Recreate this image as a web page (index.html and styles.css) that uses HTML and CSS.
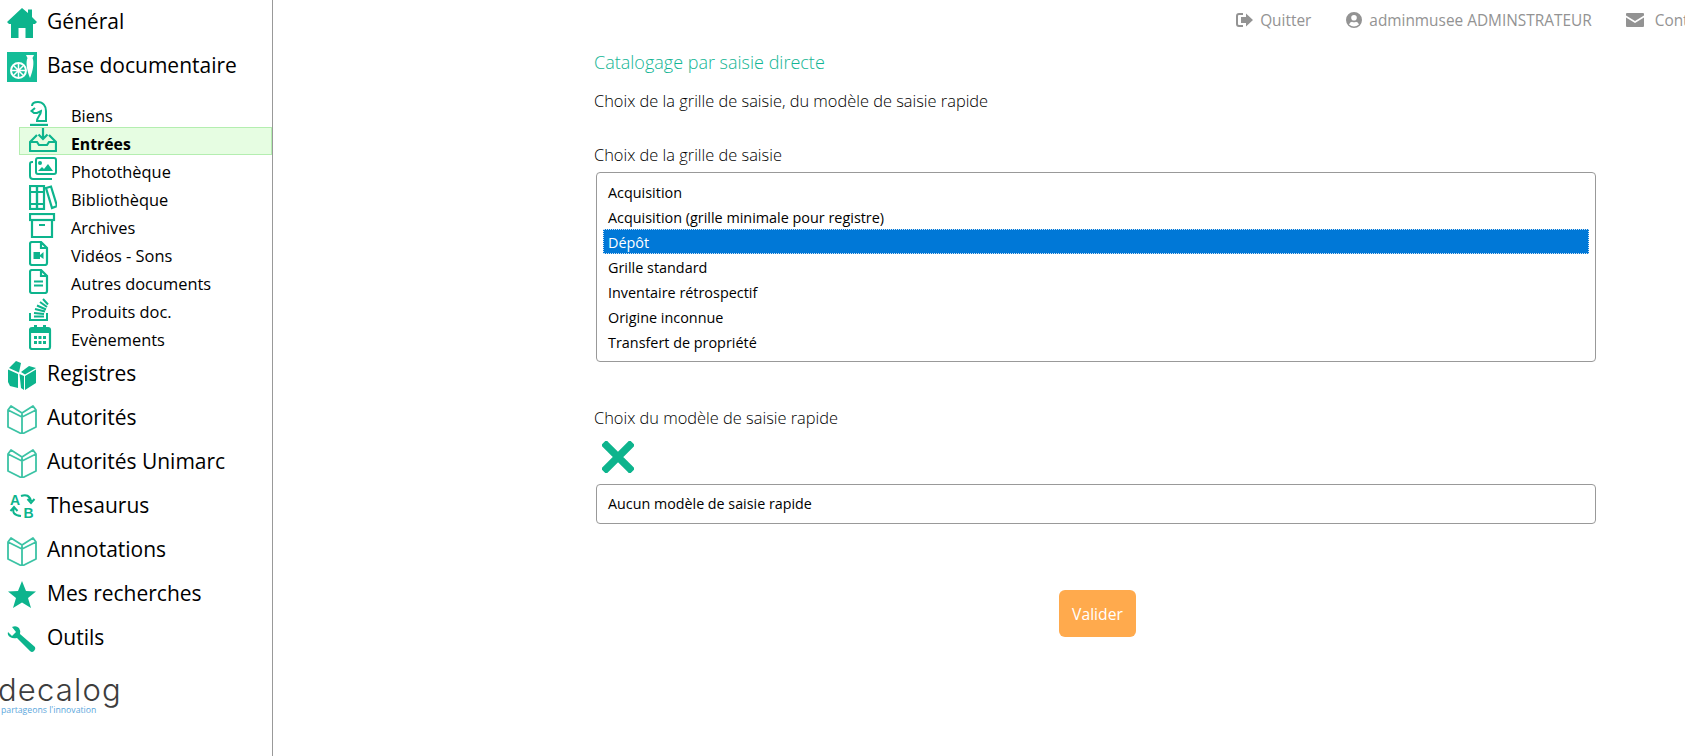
FILE: index.html
```html
<!DOCTYPE html>
<html lang="fr">

<head>
    <meta charset="UTF-8">
    <meta name="viewport" content="width=device-width, initial-scale=1.0">
    <title>Catalogage par saisie directe</title>
    <link rel="stylesheet" href="styles.css">
</head>

<body>
    <svg class="defs" width="0" height="0">
        <symbol id="book" viewBox="0 0 30 30">
            <path d="M15 9 L4 2 L1 6 V23 L15 30 L29 23 V6 L26 2 L15 9 V30 M1 6 L15 13 L29 6" fill="none" stroke="currentColor" stroke-width="1.800" stroke-linejoin="round" />
        </symbol>
    </svg>

    <aside class="sidebar">
        <nav class="menu">
            <a class="menu-row">
                <svg class="menu-icon" viewBox="0 0 30 30"><path fill="currentColor" d="M15 0 L21 5 V1.500 H25 V9 L30 14 L28 16 H26 V30 H18.500 V20 H11.500 V30 H4 V16 H2 L0 14 Z" /></svg>
                Général
            </a>
            <a class="menu-row">
                <svg class="menu-icon" viewBox="0 0 30 30">
                    <rect width="30" height="30" fill="#14bd98" />
                    <circle cx="11.500" cy="18.500" r="7.500" fill="none" stroke="#fff" stroke-width="2" />
                    <path d="M11.500 12 V25 M5 18.500 H18 M7 14 L16 23 M16 14 L7 23" stroke="#fff" stroke-width="1.500" />
                    <path fill="#fff" d="M19 3 H27 L25.500 6 C27.500 10 26 19 23 26 C20 19 18.500 10 20.500 6 Z" />
                </svg>
                Base documentaire
            </a>

            <ul class="submenu">
                <li class="sub-row">
                    <svg class="sub-icon" viewBox="0 0 28 25"><g fill="none" stroke="currentColor" stroke-width="2"><path d="M3 5 C3 2 6 1 9 1 C14 1 17 5 17 10 V20 H8 C8 16 12 14 12 10 L8 12 H5 L2.500 10 L6 7" /><path d="M1 24 H19" stroke-width="2.400" /></g></svg>
                    Biens
                </li>
                <li class="sub-row active">
                    <svg class="sub-icon" viewBox="0 0 28 25"><g fill="none" stroke="currentColor" stroke-width="2.200"><path d="M14 0 V10 M9.500 6.500 L14 11 L18.500 6.500" /><path d="M8 7 L1 14 V23 H27 V14 L20 7" stroke-linejoin="round" /><path d="M1 14 H8 L10 17 H18 L20 14 H27" /></g></svg>
                    Entrées
                </li>
                <li class="sub-row">
                    <svg class="sub-icon" viewBox="0 0 28 25"><g fill="none" stroke="currentColor" stroke-width="2"><rect x="7" y="1" width="20" height="16" rx="2" /><path d="M4 5 H3 Q1 5 1 7 V19 Q1 22 4 22 H23" /></g><circle cx="11" cy="6" r="2" fill="currentColor" /><path fill="currentColor" d="M9 14 L13 10 L15 12 L19 7 L24 14 Z" /></svg>
                    Photothèque
                </li>
                <li class="sub-row">
                    <svg class="sub-icon" viewBox="0 0 28 25"><g fill="none" stroke="currentColor" stroke-width="2.200"><rect x="1" y="1" width="7" height="23" /><rect x="8" y="1" width="7" height="23" /><path d="M17 3 L22 1.500 L28 21 L23 23 Z" /><path d="M1 7 H15 M1 19 H15" /></g></svg>
                    Bibliothèque
                </li>
                <li class="sub-row">
                    <svg class="sub-icon" viewBox="0 0 28 25"><g fill="none" stroke="currentColor" stroke-width="2.200"><rect x="1" y="1" width="24" height="6" /><path d="M3 7 V24 H23 V7 M10 12 H16" /></g></svg>
                    Archives
                </li>
                <li class="sub-row">
                    <svg class="sub-icon" viewBox="0 0 28 25"><path fill="none" stroke="currentColor" stroke-width="2.200" d="M3 1 H12 L18 7 V22 Q18 24 16 24 H3 Q1 24 1 22 V3 Q1 1 3 1 Z M12 1 V7 H18" /><path fill="currentColor" d="M4.500 11 H11 V18 H4.500 Z M11 14 L14.500 11 V18 L11 15.500 Z" /></svg>
                    Vidéos - Sons
                </li>
                <li class="sub-row">
                    <svg class="sub-icon" viewBox="0 0 28 25"><path fill="none" stroke="currentColor" stroke-width="2.200" d="M3 1 H12 L18 7 V22 Q18 24 16 24 H3 Q1 24 1 22 V3 Q1 1 3 1 Z M12 1 V7 H18 M5 12.500 H14 M5 16.500 H14" /></svg>
                    Autres documents
                </li>
                <li class="sub-row">
                    <svg class="sub-icon" viewBox="0 0 28 25"><g fill="none" stroke="currentColor" stroke-width="2"><path d="M1 16 V23 H18 V16" /><path d="M5 19.500 H15" /><path d="M5 16 L15 17 M6 12 L16 14.500 M8 8.500 L17 12.500 M11 5 L18 10 M14 2 L19 7.500" /></g></svg>
                    Produits doc.
                </li>
                <li class="sub-row">
                    <svg class="sub-icon" viewBox="0 0 28 25"><rect x="1" y="3" width="20" height="21" rx="2" fill="none" stroke="currentColor" stroke-width="2.200" /><path fill="currentColor" d="M1 3 H21 V8 H1 Z M5 0 H8 V4 H5 Z M14 0 H17 V4 H14 Z M5 11 H8 V14 H5 Z M9.500 11 H12.500 V14 H9.500 Z M14 11 H17 V14 H14 Z M5 16 H8 V19 H5 Z M9.500 16 H12.500 V19 H9.500 Z M14 16 H17 V19 H14 Z" /></svg>
                    Evènements
                </li>
            </ul>

            <a class="menu-row">
                <svg class="menu-icon" viewBox="0 0 30 30"><path fill="currentColor" d="M1 9.500 L11 14 V28 L3 26 L1 22 Z M2 8 L9 1 L14 3 L12 12.500 Z M12.500 14 L17 16 V30 L14 28 Z M14 12 L22 6 L29 8 L18 14.500 Z M18 16 L29 9.500 V23 L18 30 Z" /></svg>
                Registres
            </a>
            <a class="menu-row">
                <svg class="menu-icon book" viewBox="0 0 30 30"><use href="#book" /></svg>
                Autorités
            </a>
            <a class="menu-row">
                <svg class="menu-icon book" viewBox="0 0 30 30"><use href="#book" /></svg>
                Autorités Unimarc
            </a>
            <a class="menu-row">
                <svg class="menu-icon" viewBox="0 0 30 30">
                    <text class="abc-letter" x="3" y="13">A</text>
                    <text class="abc-letter" x="16.500" y="26">B</text>
                    <path d="M14 4 Q22 1 24 9 M20.500 7 L24 11 L27.500 7 M7 16 Q4 23 14 24 M3.500 19 L7 15 L10.500 19" fill="none" stroke="currentColor" stroke-width="2" />
                </svg>
                Thesaurus
            </a>
            <a class="menu-row">
                <svg class="menu-icon book" viewBox="0 0 30 30"><use href="#book" /></svg>
                Annotations
            </a>
            <a class="menu-row">
                <svg class="menu-icon" viewBox="0 0 30 30"><path fill="currentColor" d="M15 1 L19 11 L29 11.500 L21 18 L24 28 L15 22.500 L6 28 L9 18 L1 11.500 L11 11 Z" /></svg>
                Mes recherches
            </a>
            <a class="menu-row">
                <svg class="menu-icon" viewBox="0 0 30 30"><path fill="currentColor" d="M1 8 L5 12 L9 8 L5 3 Q9 1 12 4 Q14 7 13 10 L28 23 Q29 25 27 27 Q25 29 23 27 L10 14 Q6 15 3 13 Q0 11 1 8 Z" /></svg>
                Outils
            </a>
        </nav>

        <div class="logo">
            <div class="logo-name">decalog</div>
            <div class="logo-tag">partageons l'innovation</div>
        </div>
    </aside>

    <main class="page">
        <header class="topbar">
            <a class="top-link">
                <svg class="top-icon" viewBox="0 0 18 16"><path fill="none" stroke="currentColor" stroke-width="2" d="M7 2 H3 Q1 2 1 4 V12 Q1 14 3 14 H7" /><path fill="currentColor" d="M5 5 H10 V1.500 L17 8 L10 14.500 V11 H5 Z" /></svg>
                Quitter
            </a>
            <a class="top-link">
                <svg class="top-icon" viewBox="0 0 16 16"><path fill="currentColor" fill-rule="evenodd" d="M8 0 A8 8 0 1 1 8 16 A8 8 0 1 1 8 0 Z M8 3 A2.800 2.800 0 1 0 8 8.600 A2.800 2.800 0 1 0 8 3 Z M3 12.500 Q8 16.500 13 12.500 Q12 9.800 10 9.800 Q8 10.800 6 9.800 Q4 9.800 3 12.500 Z" /></svg>
                adminmusee ADMINSTRATEUR
            </a>
            <a class="top-link">
                <svg class="top-icon mail" viewBox="0 0 18 14"><path fill="currentColor" d="M1 0 H17 Q18 0 18 1 V2.500 L9 8 L0 2.500 V1 Q0 0 1 0 Z M0 4.500 L9 10 L18 4.500 V13 Q18 14 17 14 H1 Q0 14 0 13 Z" /></svg>
                Contact
            </a>
        </header>

        <section class="content">
            <h1 class="title">Catalogage par saisie directe</h1>
            <p class="subtitle">Choix de la grille de saisie, du modèle de saisie rapide</p>

            <h2 class="label first-label">Choix de la grille de saisie</h2>
            <ul class="listbox">
                <li>Acquisition</li>
                <li>Acquisition (grille minimale pour registre)</li>
                <li class="selected">Dépôt</li>
                <li>Grille standard</li>
                <li>Inventaire rétrospectif</li>
                <li>Origine inconnue</li>
                <li>Transfert de propriété</li>
            </ul>

            <h2 class="label second-label">Choix du modèle de saisie rapide</h2>
            <svg class="clear-icon" viewBox="0 0 30 30"><path d="M4 4 L26 26 M26 4 L4 26" stroke="currentColor" stroke-width="7" stroke-linecap="square" /></svg>
            <div class="field">Aucun modèle de saisie rapide</div>

            <div class="actions">
                <button class="validate">Valider</button>
            </div>
        </section>
    </main>
</body>

</html>
```

FILE: styles.css
```css
html,
body {
    height: 100%;
}

body {
    font-family: 'Open Sans', 'Noto Sans', sans-serif;
    margin: 0;
    padding: 0;
    background-color: #fff;
    color: #000;
    display: flex;
    overflow: hidden;
}

.defs {
    position: absolute;
}

/* left menu */
.sidebar {
    width: 272px;
    flex: none;
    border-right: 1px solid #999;
    min-height: 100%;
}

.menu {
    margin-top: -1px;
}

.menu-row {
    display: flex;
    align-items: center;
    gap: 10px;
    height: 44px;
    box-sizing: border-box;
    padding: 0 0 1px 7px;
    font-size: 21px;
    color: #000;
}

.menu-icon {
    width: 30px;
    height: 30px;
    margin-top: 5px;
    flex: none;
    color: #0db48d;
}

.menu-icon.book {
    color: #3cc3a5;
}

.abc-letter {
    font-family: 'Liberation Sans', sans-serif;
    font-size: 14px;
    font-weight: bold;
    fill: currentColor;
}

.submenu {
    list-style: none;
    margin: 12px 0 0 19px;
    padding: 0;
}

.sub-row {
    display: flex;
    height: 28px;
    box-sizing: border-box;
    padding-left: 10px;
    font-size: 16.400px;
    line-height: 34px;
}

.sub-row.active {
    background-color: #e6fde2;
    outline: 1px solid #b4eeb0;
    outline-offset: -1px;
    font-size: 15.800px;
    font-weight: bold;
}

.sub-icon {
    width: 28px;
    height: 25px;
    margin: 2px 14px 0 0;
    flex: none;
    color: #0db48d;
}

.sub-row.active .sub-icon {
    margin-top: 1px;
}

/* logo at the bottom of the menu */
.logo {
    margin-top: 16px;
}

.logo-name {
    font-family: 'Inter', sans-serif;
    font-weight: 300;
    font-size: 31px;
    line-height: 29px;
    letter-spacing: 1.200px;
    margin-left: -2px;
    color: #3d3d3d;
}

.logo-tag {
    font-size: 8.700px;
    line-height: 12px;
    margin-left: 1px;
    color: #5ba7dc;
}

/* top links */
.page {
    flex: 1;
    min-width: 0;
}

.topbar {
    display: flex;
    justify-content: flex-end;
    align-items: center;
    gap: 34px;
    height: 40px;
    margin-right: -25px;
    font-size: 15.400px;
    color: #939393;
}

.top-link {
    display: flex;
    align-items: center;
    gap: 6px;
}

.top-icon {
    width: 18px;
    height: 16px;
}

.top-icon.mail {
    height: 14px;
    margin-right: 5px;
}

/* form */
.content {
    width: 1002px;
    margin-left: 321px;
}

.title {
    margin: 9px 0 0;
    font-size: 18px;
    line-height: 26px;
    font-weight: 300;
    color: #12b594;
}

.subtitle {
    margin: 13px 0 0;
    font-size: 16.400px;
    line-height: 26px;
    font-weight: 300;
    color: #000;
}

.label {
    margin: 0;
    font-size: 16.400px;
    line-height: 26px;
    font-weight: 300;
    color: #000;
}

.first-label {
    margin-top: 28px;
}

.second-label {
    margin-top: 43px;
}

.listbox {
    list-style: none;
    margin: 4px 0 0 2px;
    padding: 6px 6px 0;
    height: 190px;
    box-sizing: border-box;
    border: 1px solid #999;
    border-radius: 4px;
    font-size: 14.400px;
}

.listbox li {
    height: 25px;
    line-height: 27px;
    padding-left: 5px;
}

.listbox .selected {
    background-color: #0078d7;
    color: #fff;
    outline: 1px dotted #cfe4f7;
    outline-offset: -1px;
}

.clear-icon {
    display: block;
    width: 32px;
    height: 32px;
    margin: 10px 0 0 8px;
    color: #0db48d;
}

.field {
    margin: 11px 0 0 2px;
    height: 40px;
    line-height: 38px;
    box-sizing: border-box;
    border: 1px solid #999;
    border-radius: 4px;
    padding-left: 11px;
    font-size: 14.300px;
}

.actions {
    display: flex;
    justify-content: center;
    margin-top: 66px;
    padding-left: 5px;
}

.validate {
    width: 77px;
    height: 47px;
    padding: 0;
    border: none;
    border-radius: 6px;
    background-color: #ffaa4d;
    color: #fff;
    font-family: inherit;
    font-size: 15.700px;
    cursor: pointer;
}
```
